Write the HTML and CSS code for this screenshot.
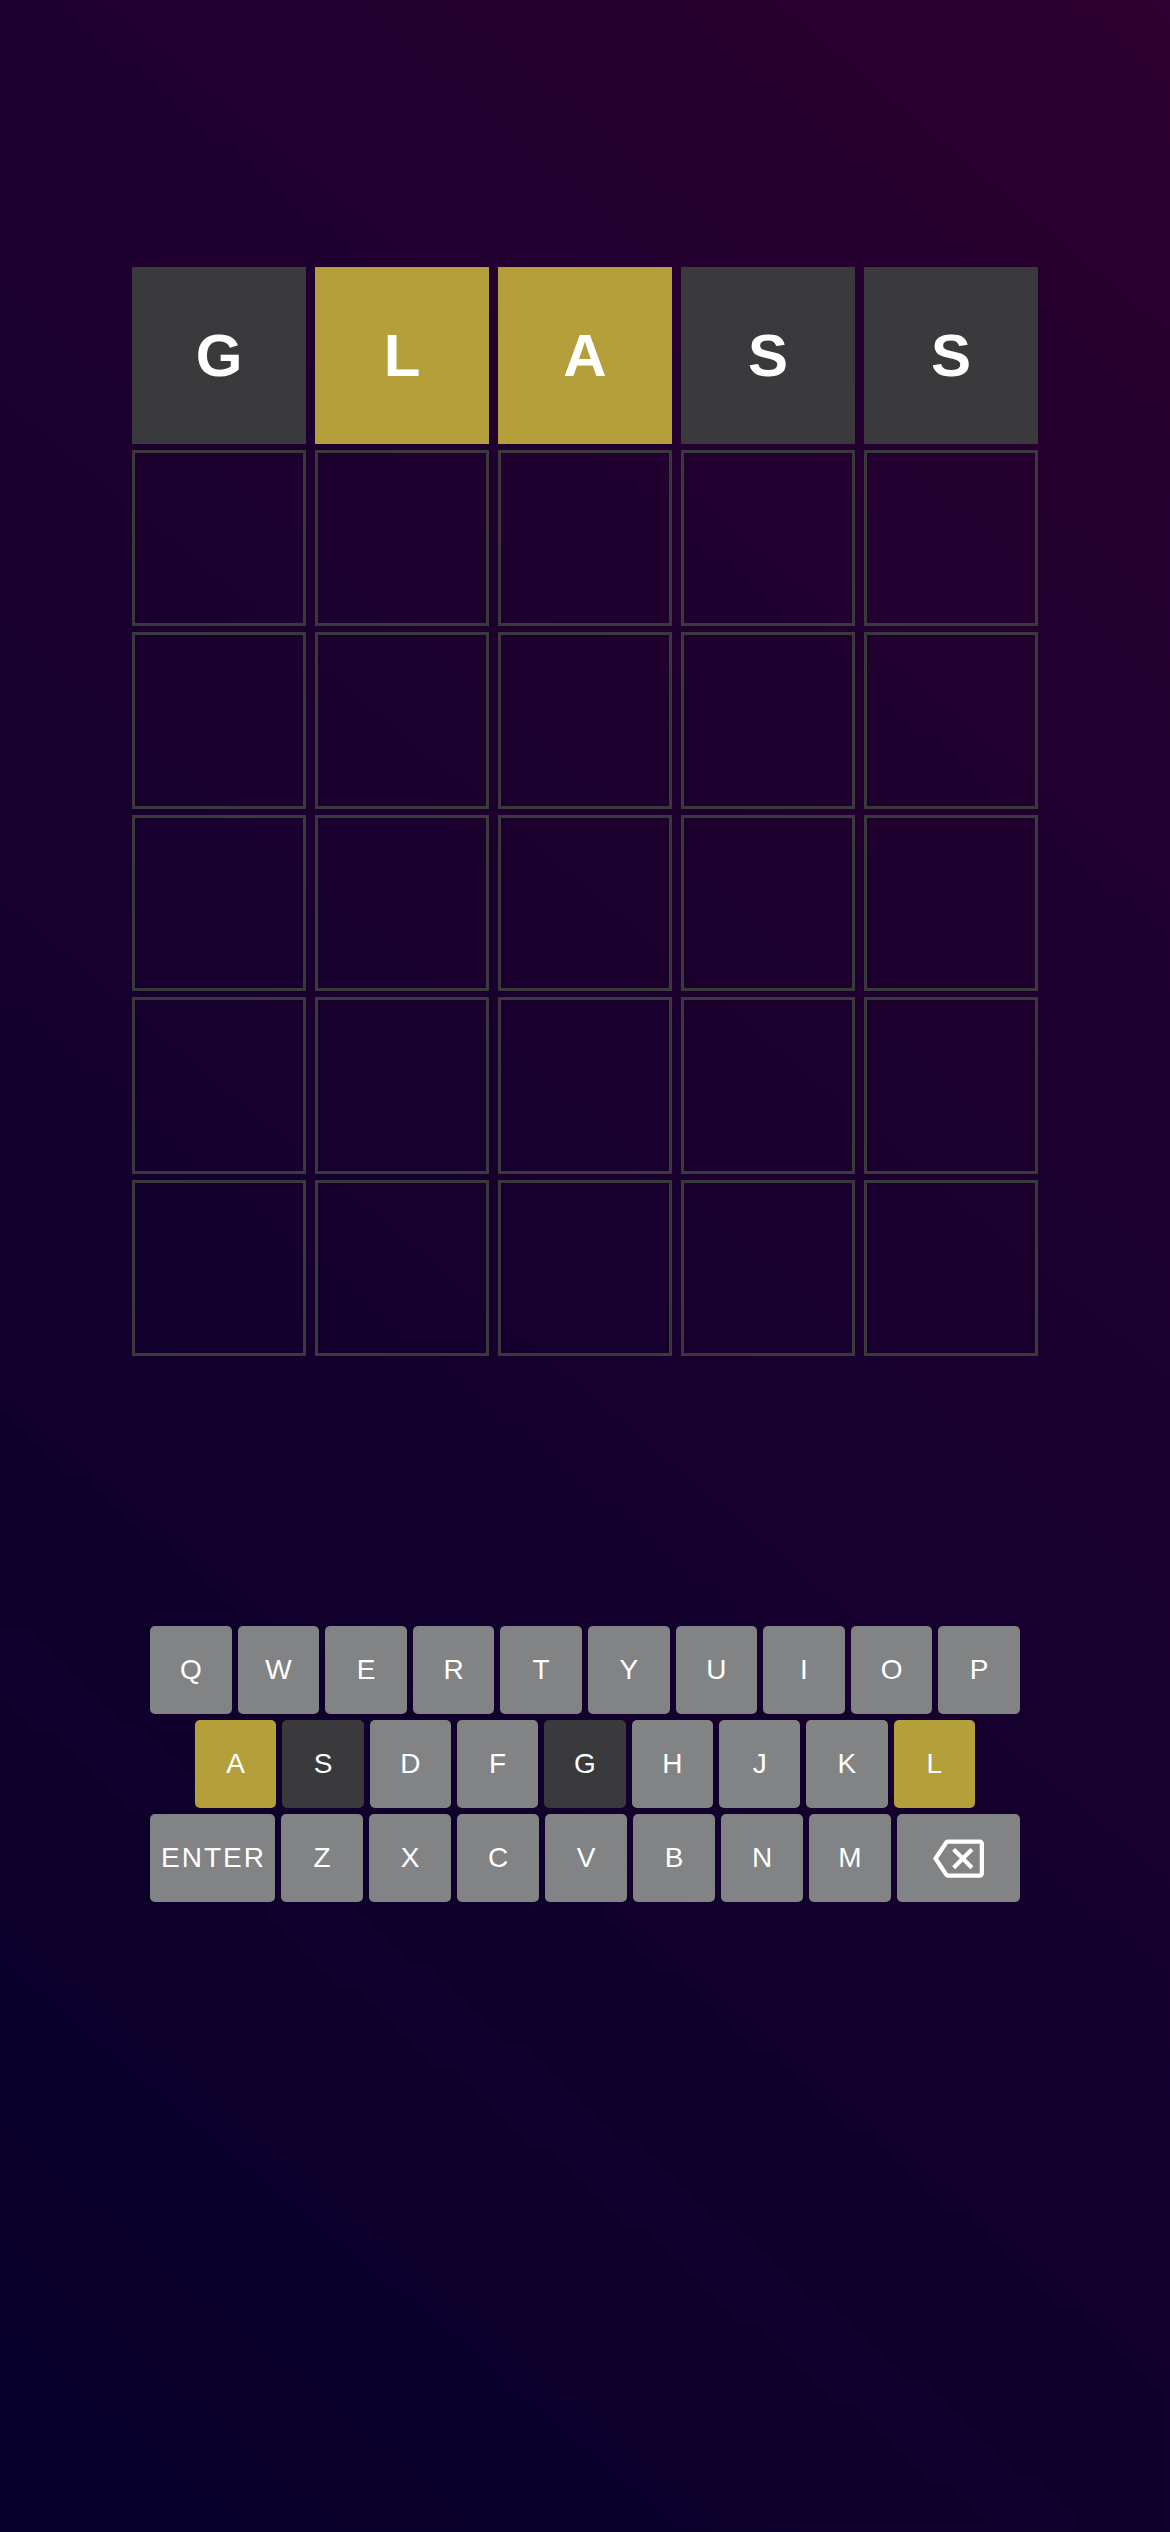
FILE: index.html
```html
<!DOCTYPE html>
<html lang="en">
<head>
<meta charset="utf-8">
<title>Wordle</title>
<link rel="stylesheet" href="styles.css">
</head>
<body>
<main class="app">
  <section class="board">
    <div class="tile filled absent">G</div>
    <div class="tile filled present">L</div>
    <div class="tile filled present">A</div>
    <div class="tile filled absent">S</div>
    <div class="tile filled absent">S</div>
    <div class="tile"></div><div class="tile"></div><div class="tile"></div><div class="tile"></div><div class="tile"></div>
    <div class="tile"></div><div class="tile"></div><div class="tile"></div><div class="tile"></div><div class="tile"></div>
    <div class="tile"></div><div class="tile"></div><div class="tile"></div><div class="tile"></div><div class="tile"></div>
    <div class="tile"></div><div class="tile"></div><div class="tile"></div><div class="tile"></div><div class="tile"></div>
    <div class="tile"></div><div class="tile"></div><div class="tile"></div><div class="tile"></div><div class="tile"></div>
  </section>

  <section class="keyboard">
    <div class="krow">
      <button class="key">Q</button>
      <button class="key">W</button>
      <button class="key">E</button>
      <button class="key">R</button>
      <button class="key">T</button>
      <button class="key">Y</button>
      <button class="key">U</button>
      <button class="key">I</button>
      <button class="key">O</button>
      <button class="key">P</button>
    </div>
    <div class="krow krow-mid">
      <button class="key present">A</button>
      <button class="key absent">S</button>
      <button class="key">D</button>
      <button class="key">F</button>
      <button class="key absent">G</button>
      <button class="key">H</button>
      <button class="key">J</button>
      <button class="key">K</button>
      <button class="key present">L</button>
    </div>
    <div class="krow">
      <button class="key wide enter">ENTER</button>
      <button class="key">Z</button>
      <button class="key">X</button>
      <button class="key">C</button>
      <button class="key">V</button>
      <button class="key">B</button>
      <button class="key">N</button>
      <button class="key">M</button>
      <button class="key wide" aria-label="backspace">
        <svg class="bksp" viewBox="0 0 24 24" width="51" height="51" aria-hidden="true">
          <path fill="#ffffff" d="M22 3H7c-.69 0-1.230.35-1.59.88L0 12l5.41 8.11c.36.53.9.89 1.59.89h15c1.1 0 2-.9 2-2V5c0-1.1-.9-2-2-2zm0 16H7.07L2.4 12l4.66-7H22v14zm-11.59-2L14 13.41 17.59 17 19 15.59 15.41 12 19 8.41 17.590 7 14 10.59 10.41 7 9 8.41 12.59 12 9 15.59z"/>
        </svg>
      </button>
    </div>
  </section>
</main>
</body>
</html>
```

FILE: styles.css
```css
* {
  box-sizing: border-box;
}

html, body {
  margin: 0;
  padding: 0;
}

body {
  width: 1170px;
  min-height: 2532px;
  background: linear-gradient(40deg, #06002a 0%, #17002e 50%, #2c0030 100%);
  font-family: "Liberation Sans", Arial, sans-serif;
  color: #ffffff;
}

.app {
  display: flex;
  flex-direction: column;
  align-items: center;
  padding-top: 267px;
}

.board {
  display: grid;
  grid-template-columns: repeat(5, 174px);
  grid-auto-rows: 176.5px;
  column-gap: 9px;
  row-gap: 6px;
}

.tile {
  border: 3px solid #3a3a3c;
  display: flex;
  align-items: center;
  justify-content: center;
  font-weight: 700;
  font-size: 60px;
  color: #ffffff;
}

.tile.filled {
  border: none;
}

.tile.absent {
  background: #3a3a3c;
}

.tile.present {
  background: #b59f3b;
}

.keyboard {
  margin-top: 270px;
  width: 870px;
  display: flex;
  flex-direction: column;
  gap: 6px;
}

.krow {
  display: flex;
  gap: 6px;
  height: 88px;
}

.krow-mid {
  padding: 0 45px;
}

.key {
  flex: 1 1 0;
  min-width: 0;
  border: none;
  border-radius: 5px;
  background: #818384;
  color: #ffffff;
  font-family: "Liberation Sans", Arial, sans-serif;
  font-size: 28px;
  font-weight: 400;
  padding: 0;
  display: flex;
  align-items: center;
  justify-content: center;
}

.key.wide {
  flex: 1.5 1 0;
}

.key.enter {
  letter-spacing: 2px;
  padding-left: 2px;
}

.key.present {
  background: #b59f3b;
}

.key.absent {
  background: #3a3a3c;
}

.bksp {
  display: block;
}
```
